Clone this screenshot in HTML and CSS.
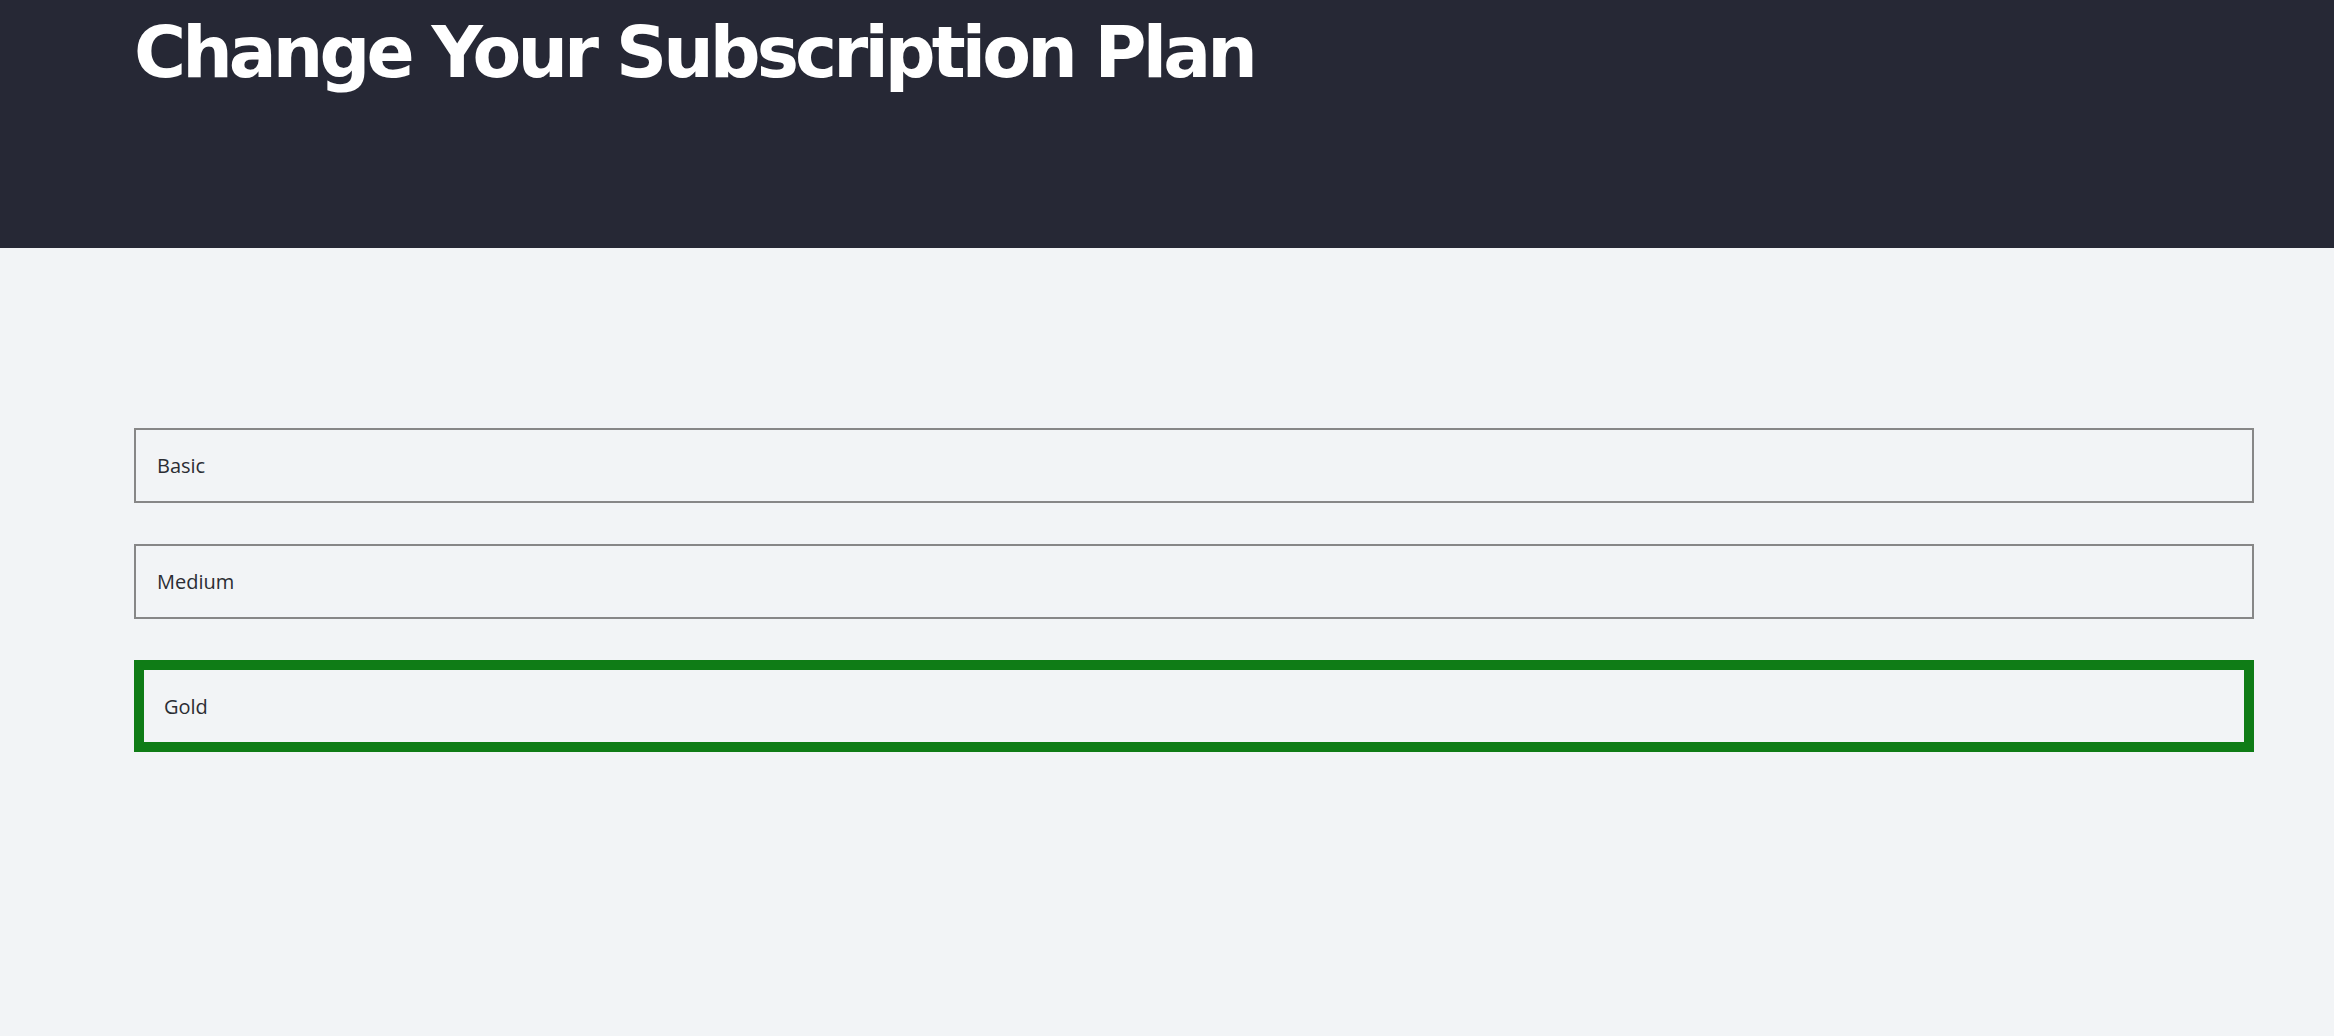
FILE: index.html
```html
<!DOCTYPE html>
<html lang="en">
<head>
<meta charset="utf-8">
<title>Change Your Subscription Plan</title>
<link rel="stylesheet" href="styles.css">
</head>
<body>
<header class="hero">
  <h1 class="hero-title">Change Your Subscription Plan</h1>
</header>
<main class="plans">
  <div class="plan">Basic</div>
  <div class="plan">Medium</div>
  <div class="plan plan-selected">Gold</div>
</main>
</body>
</html>
```

FILE: styles.css
```css
html, body {
  margin: 0;
  padding: 0;
}
body {
  background: #f2f4f6;
  font-family: "Open Sans", "Noto Sans", sans-serif;
}
.hero {
  box-sizing: border-box;
  height: 248px;
  background: #262835;
  padding: 17px 80px 0 134px;
}
.hero-title {
  margin: 0;
  color: #ffffff;
  font-family: "DejaVu Sans", sans-serif;
  font-weight: bold;
  font-size: 71px;
  line-height: 71px;
  letter-spacing: -3.9px;
}
.plans {
  display: flex;
  flex-direction: column;
  gap: 41px;
  padding: 180px 80px 0 134px;
}
.plan {
  box-sizing: border-box;
  height: 75px;
  border: 2px solid #878787;
  padding-left: 21px;
  display: flex;
  align-items: center;
  font-size: 20px;
  color: #2b2d33;
}
.plan-selected {
  height: 92px;
  border: 10px solid #0f7c16;
  padding-left: 20px;
}
```
